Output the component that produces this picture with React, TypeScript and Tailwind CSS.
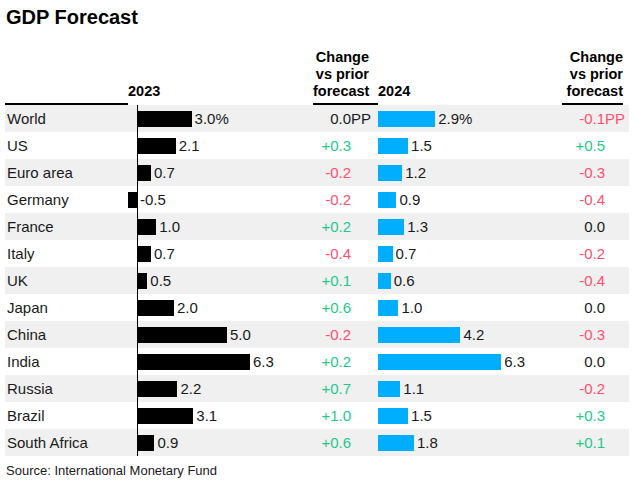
const ROWS = [
  { name: 'World', a: 3.0, ca: '0.0', b: 2.9, cb: '-0.1', pct: true },
  { name: 'US', a: 2.1, ca: '+0.3', b: 1.5, cb: '+0.5' },
  { name: 'Euro area', a: 0.7, ca: '-0.2', b: 1.2, cb: '-0.3' },
  { name: 'Germany', a: -0.5, ca: '-0.2', b: 0.9, cb: '-0.4' },
  { name: 'France', a: 1.0, ca: '+0.2', b: 1.3, cb: '0.0' },
  { name: 'Italy', a: 0.7, ca: '-0.4', b: 0.7, cb: '-0.2' },
  { name: 'UK', a: 0.5, ca: '+0.1', b: 0.6, cb: '-0.4' },
  { name: 'Japan', a: 2.0, ca: '+0.6', b: 1.0, cb: '0.0' },
  { name: 'China', a: 5.0, ca: '-0.2', b: 4.2, cb: '-0.3' },
  { name: 'India', a: 6.3, ca: '+0.2', b: 6.3, cb: '0.0' },
  { name: 'Russia', a: 2.2, ca: '+0.7', b: 1.1, cb: '-0.2' },
  { name: 'Brazil', a: 3.1, ca: '+1.0', b: 1.5, cb: '+0.3' },
  { name: 'South Africa', a: 0.9, ca: '+0.6', b: 1.8, cb: '+0.1' },
];

const COLS = 'grid grid-cols-[123px_185px_65px_184px_61px]';

function changeColor(v: string) {
  if (v.startsWith('+')) return 'text-[#1fc98c]';
  if (v.startsWith('-')) return 'text-[#ff4f6e]';
  return 'text-[#1a1a1a]';
}

function Change({ value, pp, pad }: { value: string; pp: boolean; pad: string }) {
  return (
    <div className={`flex items-center justify-end ${pad}`}>
      <span className={changeColor(value)}>{value}</span>
      <span className={`w-[20px] whitespace-nowrap ${changeColor(value)}`}>{pp ? 'PP' : ''}</span>
    </div>
  );
}

function HeaderChange({ pad }: { pad: string }) {
  return (
    <div className={`border-b-2 border-black pb-[3px] text-right ${pad}`}>
      Change
      <br />
      vs prior
      <br />
      forecast
    </div>
  );
}

export default function App() {
  return (
    <div className="w-[634px] h-[486px] bg-white px-[5px] font-['Liberation_Sans',Arial,sans-serif] text-[#1a1a1a]">
      <div className="h-[29px] pt-[5px] pl-[1px] text-[20px] leading-[24px] font-bold text-black">
        GDP Forecast
      </div>

      {/* Column headers */}
      <div className={`${COLS} h-[76px] items-end text-[14.5px] leading-[17px] font-bold text-black`}>
        <div className="border-b-2 border-black" />
        <div className="border-b-2 border-transparent pb-[3px]">2023</div>
        <HeaderChange pad="pr-[9px]" />
        <div className="border-b-2 border-transparent pb-[3px]">2024</div>
        <HeaderChange pad="pr-0" />
      </div>

      {/* Rows */}
      <div className="text-[15px] leading-[27px]">
        {ROWS.map((r, i) => (
          <div key={r.name} className={`${COLS} h-[27px] ${i % 2 === 0 ? 'bg-[#f0f0f0]' : 'bg-white'}`}>
            <div className="pl-[2px] whitespace-nowrap">{r.name}</div>

            <div className="flex items-stretch">
              <div className="w-[9px] flex items-center justify-end">
                {r.a < 0 && <div className="h-4 bg-black" style={{ width: -r.a * 17.7 }} />}
              </div>
              <div className="w-px bg-black" />
              <div className="flex items-center">
                {r.a > 0 && <div className="h-4 bg-black" style={{ width: r.a * 17.7 + 0.5 }} />}
                <span className={r.a < 0 ? 'ml-[2px]' : 'ml-[3px]'}>
                  {r.a.toFixed(1)}
                  {r.pct ? '%' : ''}
                </span>
              </div>
            </div>

            <Change value={r.ca} pp={!!r.pct} pad="pr-[7px]" />

            <div className="flex items-center">
              <div className="h-4 bg-[#00aeff]" style={{ width: r.b * 19.4 + 1 }} />
              <span className="ml-[3px]">
                {r.b.toFixed(1)}
                {r.pct ? '%' : ''}
              </span>
            </div>

            <Change value={r.cb} pp={!!r.pct} pad="-mr-[2px]" />
          </div>
        ))}
      </div>

      <div className="mt-[7px] pl-[1px] text-[13px] leading-[16px] text-[#1a1a1a]">
        Source: International Monetary Fund
      </div>
    </div>
  );
}
